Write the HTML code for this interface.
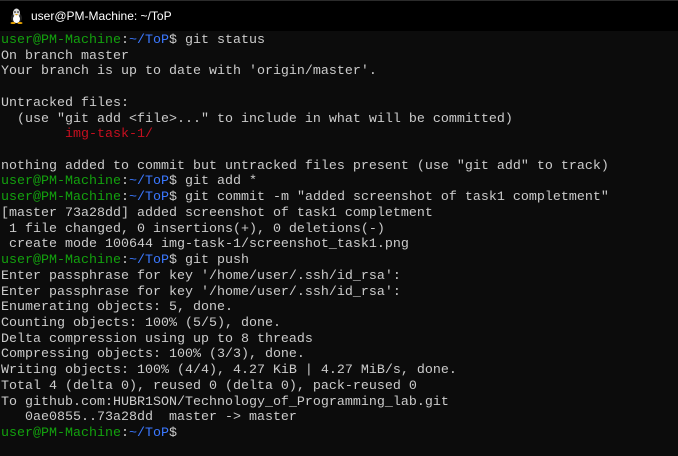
<!DOCTYPE html>
<html><head><style>
html,body{margin:0;padding:0;background:#0c0c0c;width:678px;height:456px;overflow:hidden}
#tb{position:absolute;left:0;top:0;width:678px;height:31px;background:#000;border-top:1px solid #2b2b2b;box-sizing:border-box}
#tt{position:absolute;left:31px;top:8px;font:12px "Liberation Sans",sans-serif;color:#fff}
#term{position:absolute;left:1px;top:33px;font:13.33px/15.72px "Liberation Mono",monospace;color:#cccccc;white-space:pre;margin:0}
.g{color:#13a10e}.b{color:#3b78ff}.r{color:#c50f1f}
</style></head><body>
<div id="tb">
<svg style="position:absolute;left:10px;top:7px" width="13" height="16" viewBox="0 0 13 16">
<ellipse cx="6.5" cy="10" rx="5.5" ry="5.5" fill="#222"/>
<ellipse cx="6.5" cy="5" rx="3.5" ry="4.5" fill="#ddd"/>
<ellipse cx="6.5" cy="11" rx="3.5" ry="4" fill="#fff"/>
<circle cx="5" cy="4" r="0.8" fill="#000"/><circle cx="8" cy="4" r="0.8" fill="#000"/>
<path d="M5 6 L8 6 L6.5 7.5Z" fill="#e8a300"/>
<ellipse cx="3" cy="15" rx="2.5" ry="1" fill="#e8a300"/><ellipse cx="10" cy="15" rx="2.5" ry="1" fill="#e8a300"/>
</svg>
<div id="tt">user@PM-Machine: ~/ToP</div>
</div>
<pre id="term"><span class="g">user@PM-Machine</span>:<span class="b">~/ToP</span>$ git status
On branch master
Your branch is up to date with 'origin/master'.

Untracked files:
  (use "git add &lt;file&gt;..." to include in what will be committed)
        <span class="r">img-task-1/</span>

nothing added to commit but untracked files present (use "git add" to track)
<span class="g">user@PM-Machine</span>:<span class="b">~/ToP</span>$ git add *
<span class="g">user@PM-Machine</span>:<span class="b">~/ToP</span>$ git commit -m "added screenshot of task1 completment"
[master 73a28dd] added screenshot of task1 completment
 1 file changed, 0 insertions(+), 0 deletions(-)
 create mode 100644 img-task-1/screenshot_task1.png
<span class="g">user@PM-Machine</span>:<span class="b">~/ToP</span>$ git push
Enter passphrase for key '/home/user/.ssh/id_rsa':
Enter passphrase for key '/home/user/.ssh/id_rsa':
Enumerating objects: 5, done.
Counting objects: 100% (5/5), done.
Delta compression using up to 8 threads
Compressing objects: 100% (3/3), done.
Writing objects: 100% (4/4), 4.27 KiB | 4.27 MiB/s, done.
Total 4 (delta 0), reused 0 (delta 0), pack-reused 0
To github.com:HUBR1SON/Technology_of_Programming_lab.git
   0ae0855..73a28dd  master -&gt; master
<span class="g">user@PM-Machine</span>:<span class="b">~/ToP</span>$</pre>
</body></html>
